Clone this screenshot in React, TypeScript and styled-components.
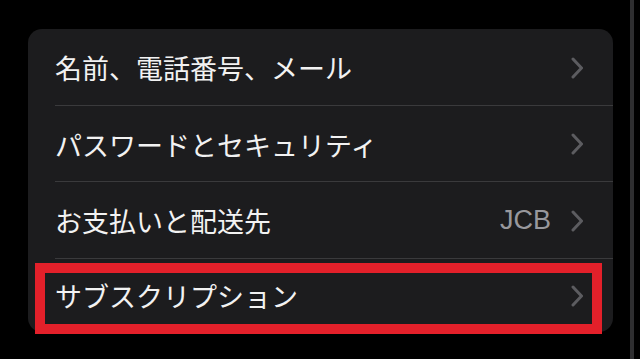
import React from "react";
import styled, { createGlobalStyle } from "styled-components";

const Global = createGlobalStyle`
  html, body { margin: 0; padding: 0; background: #000; }
  body { width: 640px; height: 359px; overflow: hidden; }
`;

const Page = styled.div`
  display: flex;
  align-items: stretch;
  width: 640px;
  height: 359px;
  background: #000;
  box-sizing: border-box;
  padding-left: 28px;
`;

const Card = styled.div`
  align-self: flex-start;
  margin-top: 29px;
  width: 585px;
  height: 303px;
  flex: none;
  background: #1c1c1e;
  border-radius: 14px;
  display: flex;
  flex-direction: column;
`;

const Row = styled.div<{ $h: number; $last?: boolean }>`
  position: relative;
  height: ${(p) => p.$h}px;
  display: flex;
  align-items: center;
  padding-left: 27px;
  padding-right: 30px;
  box-sizing: border-box;
  &::after {
    content: "";
    display: ${(p) => (p.$last ? "none" : "block")};
    position: absolute;
    left: 27px;
    right: 0;
    bottom: 0;
    height: 1px;
    background: #3a3a3c;
  }
`;

const Label = styled.span`
  flex: 1;
  color: #f2f2f2;
  font-family: "Noto Sans CJK JP", "Noto Sans", sans-serif;
  font-size: 27px;
  line-height: 1;
  white-space: nowrap;
`;

const Value = styled.span`
  color: #98989d;
  font-family: "Liberation Sans", Arial, sans-serif;
  font-size: 27px;
  line-height: 1;
  margin-right: 20px;
`;

const Highlight = styled.div`
  position: absolute;
  left: 7px;
  top: 4px;
  right: 11px;
  bottom: -2px;
  border: 10px solid #e3202a;
  box-sizing: border-box;
  pointer-events: none;
`;

const Gutter = styled.div`
  flex: 1;
`;

const EdgeLine = styled.div`
  flex: none;
  width: 4px;
  background: #2e2e30;
  margin-right: 6px;
`;

const Chevron = () => (
  <svg width="12" height="22" viewBox="0 0 12 22" aria-hidden>
    <polyline
      points="2,2 10.5,11 2,20"
      fill="none"
      stroke="#5c5c60"
      strokeWidth="3"
      strokeLinecap="round"
      strokeLinejoin="round"
    />
  </svg>
);

const rows: { label: string; value?: string; h: number; highlight?: boolean }[] = [
  { label: "名前、電話番号、メール", h: 77 },
  { label: "パスワードとセキュリティ", h: 76 },
  { label: "お支払いと配送先", value: "JCB", h: 77 },
  { label: "サブスクリプション", h: 73, highlight: true },
];

export default function App() {
  return (
    <>
      <Global />
      <Page>
        <Card>
          {rows.map((r, i) => (
            <Row key={r.label} $h={r.h} $last={i === rows.length - 1}>
              <Label>{r.label}</Label>
              {r.value && <Value>{r.value}</Value>}
              <Chevron />
              {r.highlight && <Highlight />}
            </Row>
          ))}
        </Card>
        <Gutter />
        <EdgeLine />
      </Page>
    </>
  );
}
